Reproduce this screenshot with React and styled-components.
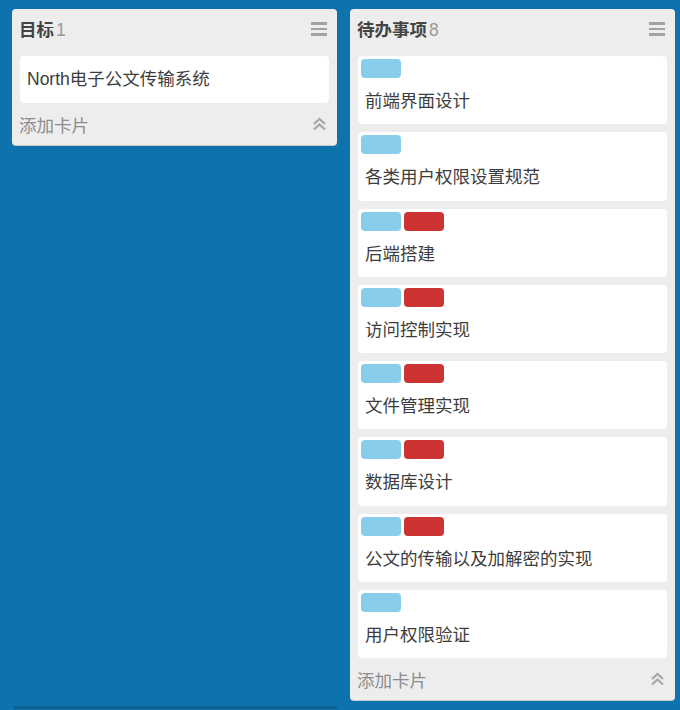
import React from 'react';
import styled, { createGlobalStyle } from 'styled-components';

const GlobalStyle = createGlobalStyle`
  html, body {
    margin: 0;
    padding: 0;
    background: #0e73ad;
    font-family: "Liberation Sans", "Noto Sans CJK SC", sans-serif;
  }
`;

const Page = styled.div`
  width: 680px;
  height: 710px;
  overflow: hidden;
  background: #0e73ad;
`;

const Board = styled.div`
  display: flex;
  align-items: flex-start;
  gap: 13px;
  padding: 9px 0 0 12px;
`;

const Column = styled.div`
  width: 325px;
  flex: none;
  background: #ededed;
  border-radius: 4px;
  box-shadow: 0 1px 0 #c9c9c9;
`;

const ColumnHeader = styled.div`
  display: flex;
  align-items: center;
  justify-content: space-between;
  height: 39px;
  padding: 0 10px 0 7px;
  box-sizing: border-box;
`;

const Title = styled.div`
  font-size: 17.5px;
  font-weight: bold;
  color: #444;
`;

const Count = styled.span`
  font-weight: normal;
  color: #999;
  margin-left: 2px;
`;

const MenuIcon = styled.div`
  display: flex;
  flex-direction: column;
  gap: 3px;
  margin-top: 1px;

  & span {
    display: block;
    width: 16px;
    height: 2.5px;
    background: #a3a3a3;
  }
`;

const CardList = styled.div`
  display: flex;
  flex-direction: column;
  gap: 8px;
  padding: 8px 8px 0;
`;

const Card = styled.div`
  background: #fff;
  border-radius: 4px;
`;

const Labels = styled.div`
  display: flex;
  gap: 3px;
  padding: 3px 3px 0;
`;

const Label = styled.div`
  width: 40px;
  height: 19px;
  border-radius: 4px;
  background: ${p => (p.$red ? '#cd3333' : '#88ceea')};
`;

const CardText = styled.div`
  padding: ${p => (p.$labelled ? '11px 7px 11.3px' : '11px 7px 12px')};
  font-size: 17.5px;
  line-height: 24px;
  color: #3d3d3d;
`;

const Footer = styled.div`
  display: flex;
  align-items: center;
  justify-content: space-between;
  height: 42px;
  padding: 0 10px 0 7px;
  box-sizing: border-box;
  font-size: 17.5px;
  color: #8c8c8c;
`;

const Scrollbar = styled.div`
  width: 324px;
  height: 3px;
  margin: 6px 0 0 13px;
  background: #0b5f91;
  border-radius: 2px;
`;

const ChevronUp = () => (
  <svg width="15" height="14" viewBox="0 0 15 14" fill="none" stroke="#a6a6a6" strokeWidth="2.2">
    <polyline points="2,7 7.5,2 13,7" />
    <polyline points="2,12.5 7.5,7.5 13,12.5" />
  </svg>
);

const columns = [
  {
    title: '目标',
    cards: [{ text: 'North电子公文传输系统', labels: [] }],
  },
  {
    title: '待办事项',
    cards: [
      { text: '前端界面设计', labels: ['blue'] },
      { text: '各类用户权限设置规范', labels: ['blue'] },
      { text: '后端搭建', labels: ['blue', 'red'] },
      { text: '访问控制实现', labels: ['blue', 'red'] },
      { text: '文件管理实现', labels: ['blue', 'red'] },
      { text: '数据库设计', labels: ['blue', 'red'] },
      { text: '公文的传输以及加解密的实现', labels: ['blue', 'red'] },
      { text: '用户权限验证', labels: ['blue'] },
    ],
  },
];

const App = () => {
  return (
    <Page>
      <GlobalStyle />
      <Board>
        {columns.map(col => (
          <Column key={col.title}>
            <ColumnHeader>
              <Title>
                {col.title}
                <Count>{col.cards.length}</Count>
              </Title>
              <MenuIcon>
                <span />
                <span />
                <span />
              </MenuIcon>
            </ColumnHeader>
            <CardList>
              {col.cards.map(card => (
                <Card key={card.text}>
                  {card.labels.length > 0 && (
                    <Labels>
                      {card.labels.map((l, i) => (
                        <Label key={i} $red={l === 'red'} />
                      ))}
                    </Labels>
                  )}
                  <CardText $labelled={card.labels.length > 0}>{card.text}</CardText>
                </Card>
              ))}
            </CardList>
            <Footer>
              <span>添加卡片</span>
              <ChevronUp />
            </Footer>
          </Column>
        ))}
      </Board>
      <Scrollbar />
    </Page>
  );
};

export default App;
